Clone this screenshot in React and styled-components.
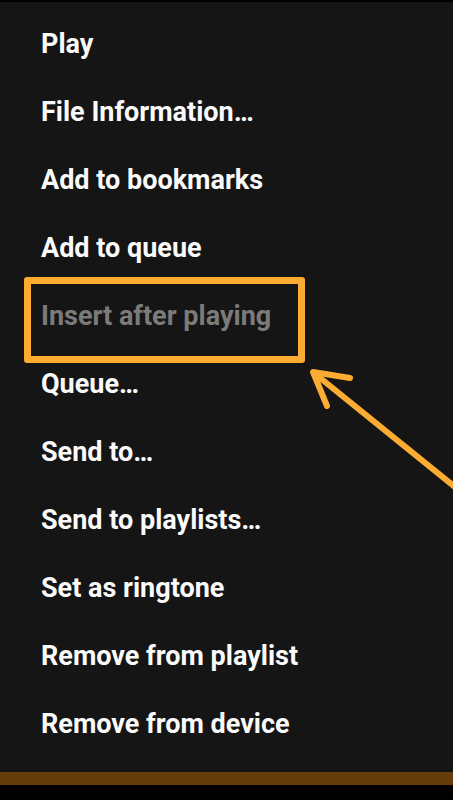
import React from "react";
import styled, { createGlobalStyle } from "styled-components";

const GlobalStyle = createGlobalStyle`
  html, body {
    margin: 0;
    padding: 0;
    background: #000;
  }
  #root {
    width: 453px;
    height: 800px;
  }
`;

const Screen = styled.div`
  position: relative;
  width: 453px;
  height: 800px;
  display: flex;
  flex-direction: column;
  background: #000;
  overflow: hidden;
  font-family: Roboto, "Noto Sans", sans-serif;
`;

const Sheet = styled.div`
  flex: 1;
  display: flex;
  flex-direction: column;
  margin-top: 2px;
  padding-top: 8px;
  background: #151515;
`;

const Item = styled.div`
  position: relative;
  height: 68px;
  display: flex;
  align-items: center;
  padding-left: 41px;
  font-size: 27px;
  font-weight: 700;
  color: ${(p) => (p.$disabled ? "#7b7b7b" : "#fafafa")};
  white-space: nowrap;
`;

const Highlight = styled.div`
  position: absolute;
  left: 24px;
  top: -5px;
  width: 281px;
  height: 86px;
  box-sizing: border-box;
  border: 7px solid #fcac32;
  border-radius: 3px;
`;

const BottomBar = styled.div`
  height: 13px;
  background: #653d0d;
  margin-bottom: 15px;
`;

const Arrow = styled.svg`
  position: absolute;
  left: 0;
  top: 0;
  pointer-events: none;
`;

const items = [
  "Play",
  "File Information…",
  "Add to bookmarks",
  "Add to queue",
  "Insert after playing",
  "Queue…",
  "Send to…",
  "Send to playlists…",
  "Set as ringtone",
  "Remove from playlist",
  "Remove from device",
];

export default function App() {
  return (
    <>
      <GlobalStyle />
      <Screen>
        <Sheet>
          {items.map((label) => (
            <Item key={label} $disabled={label === "Insert after playing"}>
              {label}
              {label === "Insert after playing" && <Highlight />}
            </Item>
          ))}
        </Sheet>
        <BottomBar />
        <Arrow width="453" height="800" viewBox="0 0 453 800">
          <g
            stroke="#fcac32"
            strokeWidth="6"
            strokeLinecap="round"
            strokeLinejoin="round"
            fill="none"
          >
            <line x1="314" y1="373" x2="470" y2="499" />
            <polyline points="350,378 313,372 327,406" />
          </g>
        </Arrow>
      </Screen>
    </>
  );
}
